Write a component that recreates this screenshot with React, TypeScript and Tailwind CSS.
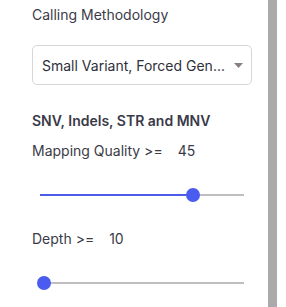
import React from "react";

function Slider({ pct }: { pct: number }) {
  return (
    <div className="relative h-[14px] mx-[8px] flex items-center">
      <div className="absolute left-0 right-0 h-[2px] bg-[#bfbfbf]" />
      <div className="absolute left-0 h-[2px] bg-[#4a5ce8]" style={{ width: `${pct}%` }} />
      <div
        className="absolute w-[14px] h-[14px] rounded-full bg-[#4a5cf0] -translate-x-1/2"
        style={{ left: `${pct}%` }}
      />
    </div>
  );
}

export default function App() {
  return (
    <div className="flex w-[286px] h-[307px] bg-white" style={{ fontFamily: "Inter, 'Noto Sans', sans-serif" }}>
      <div className="w-[268px] pl-[32px] pr-[16px] pt-[5px] text-[#3b3b48]">
        <div className="text-[14px] leading-[20px]">Calling Methodology</div>
        <div className="mt-[20px] h-[40px] border border-[#d6d6d6] rounded-[5px] flex items-center pl-[9px] pr-[8px]">
          <span className="text-[14px] text-[#2f2f3a] flex-1 whitespace-nowrap overflow-hidden">Small Variant, Forced Gen...</span>
          <svg width="9" height="5" viewBox="0 0 9 5" className="ml-[4px]">
            <path d="M0 0 L9 0 L4.5 5 Z" fill="#8a7f7f" />
          </svg>
        </div>
        <div className="mt-[26px] text-[14px] leading-[20px] font-semibold text-[#3a3a48]">SNV, Indels, STR and MNV</div>
        <div className="mt-[10px] text-[14px] leading-[20px] flex">
          <span>Mapping Quality &gt;=</span>
          <span className="ml-[15px]">45</span>
        </div>
        <div className="mt-[27px]">
          <Slider pct={75} />
        </div>
        <div className="mt-[27px] text-[14px] leading-[20px] flex">
          <span>Depth &gt;=</span>
          <span className="ml-[15px]">10</span>
        </div>
        <div className="mt-[27px]">
          <Slider pct={2} />
        </div>
      </div>
      <div className="w-[9px] h-full bg-[#aba9ac]" />
      <div className="flex-1" />
    </div>
  );
}
